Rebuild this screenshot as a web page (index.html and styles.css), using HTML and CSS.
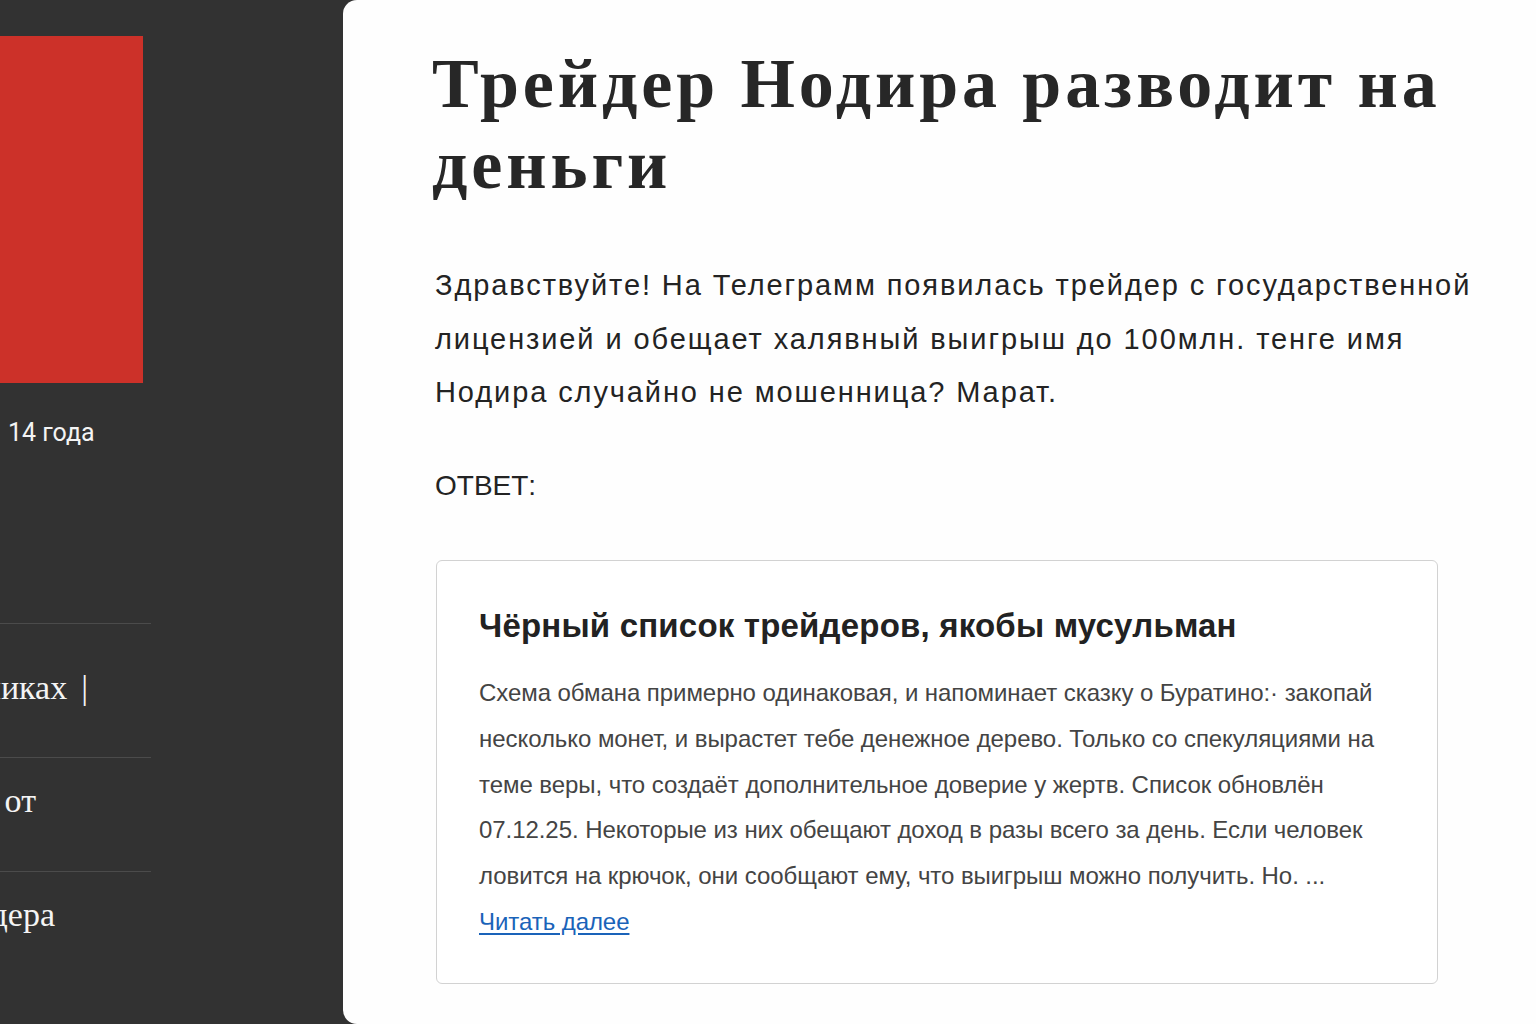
FILE: index.html
```html
<!DOCTYPE html>
<html lang="ru">
<head>
<meta charset="utf-8">
<title>Трейдер Нодира разводит на деньги</title>
<link rel="stylesheet" href="styles.css">
</head>
<body>
<div class="page">
  <aside class="sidebar">
    <div class="cover"></div>
    <div class="side-meta">14 года</div>
    <nav class="side-list">
      <a class="side-link side-link--first clip clip-a" href="#"><span>Отзывы о брокерах-мошенниках</span><span class="bar">|</span></a>
      <a class="side-link clip clip-b" href="#"><span>Как защитить себя от</span></a>
      <a class="side-link clip clip-c" href="#"><span>Проверка трейдера</span></a>
    </nav>
  </aside>

  <main class="panel">
    <article class="article">
      <h1 class="title">Трейдер Нодира разводит на деньги</h1>
      <p class="lead">Здравствуйте! На Телеграмм появилась трейдер с государственной лицензией и обещает халявный выигрыш до 100млн. тенге имя Нодира случайно не мошенница? Марат.</p>
      <p class="answer">ОТВЕТ:</p>

      <section class="card">
        <h2 class="card-title">Чёрный список трейдеров, якобы мусульман</h2>
        <p class="card-text">Схема обмана примерно одинаковая, и напоминает сказку о Буратино:· закопай несколько монет, и вырастет тебе денежное дерево. Только со спекуляциями на теме веры, что создаёт дополнительное доверие у жертв. Список обновлён 07.12.25. Некоторые из них обещают доход в разы всего за день. Если человек ловится на крючок, они сообщают ему, что выигрыш можно получить. Но. ...</p>
        <p class="card-more"><a href="#">Читать далее</a></p>
      </section>
    </article>
  </main>
</div>
</body>
</html>
```
FILE: styles.css
```css
html, body {
  margin: 0;
  padding: 0;
}

body {
  background: #323232;
  overflow: hidden;
}

.page {
  display: flex;
  height: 1024px;
}

/* ---------- left column ---------- */
.sidebar {
  width: 343px;
  flex: none;
  overflow: hidden;
  color: #f2f2f2;
}

.cover {
  width: 143px;
  height: 347px;
  margin-top: 36px;
  background: #cc3129;
}

.side-meta {
  margin-top: 35px;
  padding-left: 8px;
  font: 400 25px/30px Roboto, "Liberation Sans", sans-serif;
  color: #f4f4f4;
}

/* long link titles run past the left edge: each row is pinned to its right end */
.clip {
  display: flex;
  justify-content: flex-end;
  white-space: nowrap;
}

.clip > span {
  flex: none;
}

.clip > .bar {
  margin-left: 14px;
}

.side-list {
  width: 151px;
  margin-top: 175px;
}

.side-link {
  box-sizing: border-box;
  height: 114px;
  padding-top: 24px;
  border-top: 1px solid #4b4b4b;
  font: 400 34px/38px "Liberation Serif", "DejaVu Serif", serif;
  color: #f4f4f4;
  text-decoration: none;
}

.side-link--first {
  height: 134px;
  padding-top: 45px;
}

.clip-a { padding-right: 63px; }
.clip-b { padding-right: 115px; }
.clip-c { padding-right: 96px; }

/* ---------- content panel ---------- */
.panel {
  flex: 1;
  min-width: 0;
  background: #fefefe;
  border-radius: 14px 0 0 14px;
  padding: 43px 0 0 89px;
}

.article {
  width: 1046px;
}

.title {
  margin: 0;
  font: 700 70px/81px "Liberation Serif", "Times New Roman", serif;
  letter-spacing: 3.9px;
  color: #272727;
}

.lead,
.answer {
  margin: 0;
  padding-left: 3px;
  font: 400 28px/53.5px "Liberation Sans", Arial, sans-serif;
  color: #232323;
}

.lead {
  margin-top: 54px;
  font-size: 29px;
  letter-spacing: 1.9px;
}

.answer {
  margin-top: 39px;
}

.card {
  box-sizing: border-box;
  width: 1002px;
  margin: 48px 0 0 4px;
  padding: 45px 42px 38px;
  border: 1px solid #d2d2d2;
  border-radius: 6px;
  background: #fff;
}

.card-title {
  margin: 0;
  font: 700 33px/40px "Liberation Sans", Arial, sans-serif;
  letter-spacing: 0.2px;
  color: #222;
}

.card-text,
.card-more {
  margin: 0;
  font: 400 24px/45.8px "Liberation Sans", Arial, sans-serif;
  letter-spacing: -0.06px;
  color: #444;
}

.card-text {
  margin-top: 24px;
}

.card-more a {
  color: #1a63b9;
  text-decoration: underline;
  text-underline-offset: 3px;
}
```
